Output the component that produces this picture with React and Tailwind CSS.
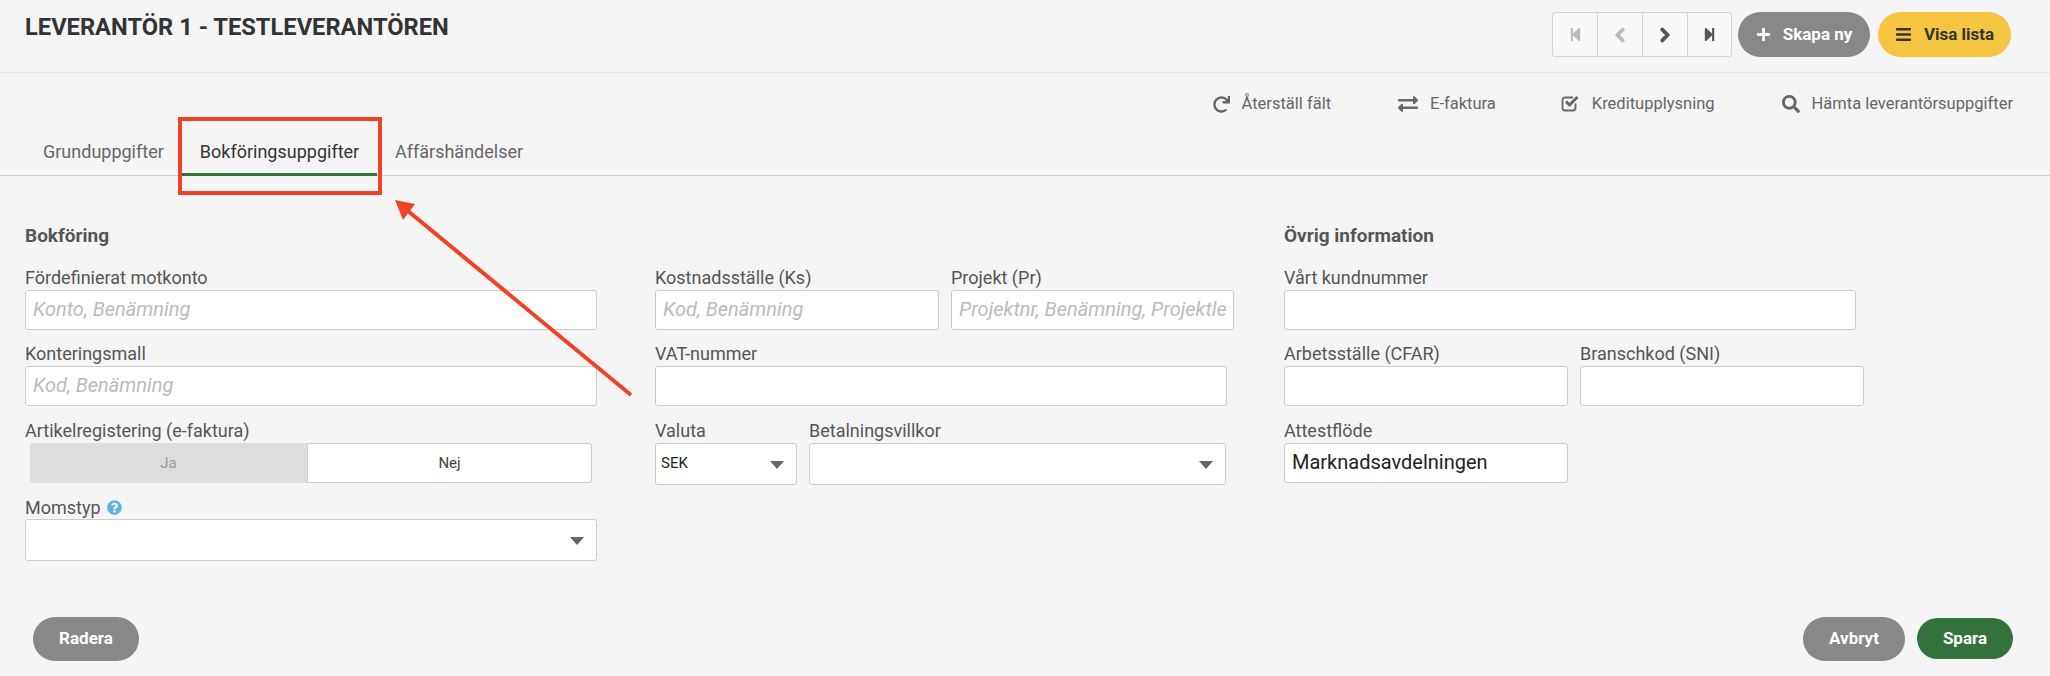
import React from "react";
import {
  FaStepBackward,
  FaStepForward,
  FaAngleLeft,
  FaAngleRight,
  FaPlus,
  FaBars,
  FaRedo,
  FaExchangeAlt,
  FaSearch,
  FaQuestionCircle,
} from "react-icons/fa";

const body = { fontFamily: "Roboto, sans-serif" };

const Label = ({ children }) => (
  <label className="block h-[24px] text-[18px] leading-[24px] text-[#555]">{children}</label>
);

const Field = ({ label, placeholder, value, className = "" }) => (
  <div className={className}>
    <Label>{label}</Label>
    <div className="h-[40px] bg-white border border-[#ccc] rounded-[3px] px-[7px] flex items-center">
      <div className="w-full overflow-hidden whitespace-nowrap -mt-[3px]">
        {placeholder && <span className="italic text-[20px] text-[#bbb]">{placeholder}</span>}
        {value && <span className="text-[20px] text-[#222]">{value}</span>}
      </div>
    </div>
  </div>
);

const Caret = () => (
  <span className="w-0 h-0 border-x-[7px] border-x-transparent border-t-[8px] border-t-[#666] mt-[2px]" />
);

const Select = ({ label, value, className = "" }) => (
  <div className={className}>
    <Label>{label}</Label>
    <div className="h-[42px] bg-white border border-[#ccc] rounded-[3px] pl-[5px] pr-[12px] flex items-center justify-between">
      <span className="text-[15px] text-[#222] -mt-[2px]">{value}</span>
      <Caret />
    </div>
  </div>
);

const Pill = ({ className = "", children }) => (
  <button className={`h-[44px] rounded-full flex items-center justify-center font-bold text-[17px] ${className}`}>
    {children}
  </button>
);

const Link = ({ icon, children, className = "" }) => (
  <a className={`flex items-center text-[16.5px] text-[#666] ${className}`}>
    {icon}
    {children}
  </a>
);

const CheckIcon = () => (
  <svg width="19" height="18" viewBox="0 0 19 18" fill="none" stroke="#666" className="mr-[12px] -mt-[3px]">
    <path d="M14.5 9.5V14a2.5 2.5 0 0 1-2.5 2.5H4A2.5 2.5 0 0 1 1.5 14V6A2.5 2.5 0 0 1 4 3.500H12" strokeWidth="1.8" />
    <path d="M5 7.500L8.500 11L16.500 3" strokeWidth="3" />
  </svg>
);

export default function App() {
  return (
    <div className="relative h-[676px] bg-[#f5f5f5] overflow-hidden" style={body}>
      {/* header */}
      <header className="h-[73px] border-b border-[#e6e6e6] flex justify-between pl-[25px] pr-[39px]">
        <h1 className="text-[23.7px] leading-[54px] font-bold text-[#333]">
          LEVERANTÖR 1 - TESTLEVERANTÖREN
        </h1>
        <div className="flex items-start pt-[12px]">
          <div className="flex h-[45px] border border-[#d5d5d5] rounded-[3px] bg-[#f8f8f8]">
            <span className="w-[45px] flex items-center justify-center border-r border-[#d5d5d5] text-[#bbb] text-[15px]"><FaStepBackward /></span>
            <span className="w-[45px] flex items-center justify-center border-r border-[#d5d5d5] text-[#bbb] text-[24px]"><FaAngleLeft /></span>
            <span className="w-[45px] flex items-center justify-center border-r border-[#d5d5d5] text-[#555] text-[24px]"><FaAngleRight /></span>
            <span className="w-[43px] flex items-center justify-center text-[#555] text-[15px]"><FaStepForward /></span>
          </div>
          <Pill className="ml-[6px] w-[132px] !h-[45px] bg-[#888] text-white gap-[12px]">
            <FaPlus className="text-[15px]" />
            Skapa ny
          </Pill>
          <Pill className="ml-[8px] w-[133px] !h-[45px] bg-[#f5c542] text-[#333] gap-[12px]">
            <FaBars className="text-[17px]" />
            Visa lista
          </Pill>
        </div>
      </header>

      {/* actions */}
      <div className="h-[62px] flex items-center justify-end pr-[37px]">
        <Link className="mr-[67px]" icon={<FaRedo className="text-[17px] mr-[12px]" />}>Återställ fält</Link>
        <Link className="mr-[65px]" icon={<FaExchangeAlt className="text-[20px] mr-[12px]" />}>E-faktura</Link>
        <Link className="mr-[67px]" icon={<CheckIcon />}>Kreditupplysning</Link>
        <Link icon={<FaSearch className="text-[18px] mr-[12px]" />}>Hämta leverantörsuppgifter</Link>
      </div>

      {/* tabs */}
      <nav className="h-[41px] border-b border-[#ccc] flex pl-[26px] text-[18px]">
        <a className="w-[156px] pl-[17px] pt-[3px] text-[#666]">Grunduppgifter</a>
        <a className="w-[195px] pt-[3px] text-center text-[#333] border-b-[3px] border-[#33733b] h-[41px]">Bokföringsuppgifter</a>
        <a className="pl-[18px] pt-[3px] text-[#666]">Affärshändelser</a>
      </nav>

      {/* form */}
      <main className="grid grid-cols-[630px_629px_1fr] pl-[25px] pt-[46px]">
        <section className="w-[572px]">
          <h2 className="h-[44px] pt-[2px] text-[19px] leading-[24px] font-bold text-[#555]">Bokföring</h2>
          <Field label="Fördefinierat motkonto" placeholder="Konto, Benämning" />
          <Field className="mt-[12px]" label="Konteringsmall" placeholder="Kod, Benämning" />
          <div className="mt-[13px]">
            <Label>Artikelregistering (e-faktura)</Label>
            <div className="h-[40px] mx-[5px] flex text-[15px]">
              <div className="w-[277px] bg-[#ddd] text-[#999] rounded-l-[3px] flex items-center justify-center">Ja</div>
              <div className="flex-1 bg-white border border-[#ccc] rounded-r-[3px] text-[#444] flex items-center justify-center">Nej</div>
            </div>
          </div>
          <div className="mt-[12px]">
            <label className="flex items-center h-[24px] text-[18px] text-[#555]">
              Momstyp
              <FaQuestionCircle className="ml-[6px] text-[15px] text-[#5bb5e0]" />
            </label>
            <div className="h-[42px] bg-white border border-[#ccc] rounded-[3px] pr-[12px] flex items-center justify-end">
              <Caret />
            </div>
          </div>
        </section>

        <section className="pt-[44px]">
          <div className="flex gap-[12px]">
            <Field className="w-[284px]" label="Kostnadsställe (Ks)" placeholder="Kod, Benämning" />
            <Field className="w-[283px]" label="Projekt (Pr)" placeholder="Projektnr, Benämning, Projektledare" />
          </div>
          <Field className="mt-[12px] w-[572px]" label="VAT-nummer" />
          <div className="mt-[13px] flex gap-[12px]">
            <Select className="w-[142px]" label="Valuta" value="SEK" />
            <Select className="w-[417px]" label="Betalningsvillkor" />
          </div>
        </section>

        <section>
          <h2 className="h-[44px] pt-[2px] text-[19px] leading-[24px] font-bold text-[#555]">Övrig information</h2>
          <Field className="w-[572px]" label="Vårt kundnummer" />
          <div className="mt-[12px] flex gap-[12px]">
            <Field className="w-[284px]" label="Arbetsställe (CFAR)" />
            <Field className="w-[284px]" label="Branschkod (SNI)" />
          </div>
          <Field className="mt-[13px] w-[284px]" label="Attestflöde" value="Marknadsavdelningen" />
        </section>
      </main>

      {/* footer */}
      <footer className="absolute left-0 right-0 top-[617px] flex items-start pl-[33px] pr-[37px]">
        <Pill className="w-[106px] bg-[#888] text-white">Radera</Pill>
        <Pill className="ml-auto w-[102px] bg-[#888] text-white">Avbryt</Pill>
        <Pill className="ml-[12px] w-[96px] !h-[41px] mt-[1px] bg-[#33733b] text-white">Spara</Pill>
      </footer>

      {/* annotation */}
      <div className="absolute left-[178px] top-[117px] w-[204px] h-[78px] border-[4px] border-[#ee4326]" />
      <svg className="absolute left-0 top-0 pointer-events-none" width="2050" height="676">
        <line x1="631" y1="395" x2="408" y2="211" stroke="#ee4326" strokeWidth="4" />
        <polygon points="395,200 415,204 403,220" fill="#ee4326" />
      </svg>
    </div>
  );
}
